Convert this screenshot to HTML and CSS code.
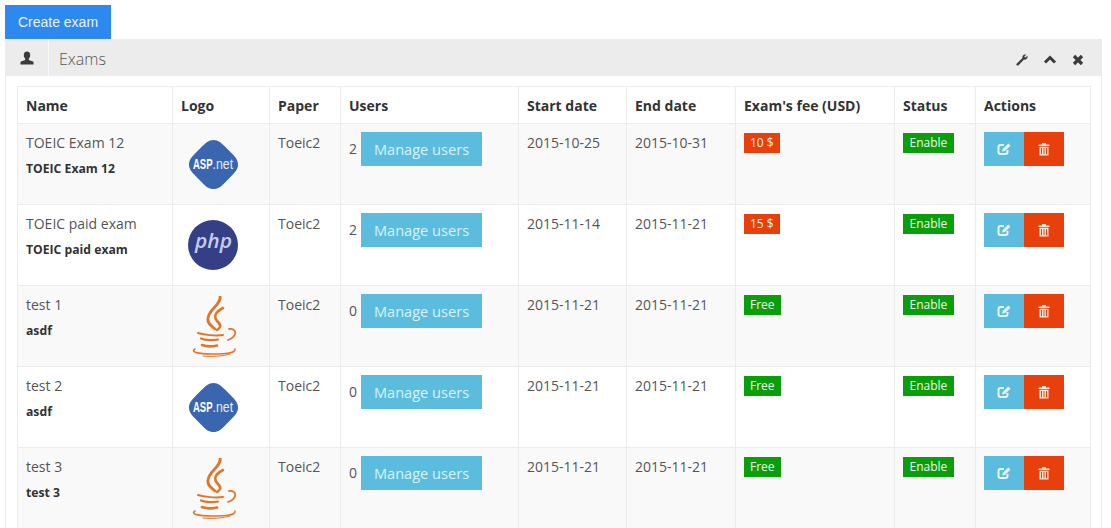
FILE: index.html
```html
<!DOCTYPE html>
<html lang="en">
<head>
<meta charset="utf-8">
<title>Exams</title>
<link rel="stylesheet" href="styles.css">
</head>
<body>
<svg class="defs" width="0" height="0" aria-hidden="true">
  <symbol id="asp" viewBox="0 0 52 52">
    <path d="M26 1C31 1 34 4 38 8L44 14C48 18 51 21 51 26C51 31 48 34 44 38L38 44C34 48 31 51 26 51C21 51 18 48 14 44L8 38C4 34 1 31 1 26C1 21 4 18 8 14L14 8C18 4 21 1 26 1Z" fill="#3a66b0"/>
  </symbol>
  <symbol id="java" viewBox="0 0 48 62">
    <g fill="none" stroke="#e0762a" stroke-linecap="round">
      <path d="M30 0C32 8 19 13 18 22C17 28 22 30 25 33" stroke-width="2.800"/>
      <path d="M33 12C25 16 23 21 28 26C32 30 30 32 27 34" stroke-width="2.600"/>
      <path d="M8 37C14 39 26 40 33 39" stroke-width="2"/>
      <path d="M39 33C47 32 48 40 38 44" stroke-width="1.800"/>
      <path d="M11 42.500C16 44.500 24 44.500 28 43.500" stroke-width="2.200"/>
      <path d="M12 49C16 50.500 23 50.500 27 49.500" stroke-width="2.600"/>
      <path d="M5 53C0 56 8 58 22 58C36 58 46 57 45 53" stroke-width="1.600"/>
      <path d="M13 60C22 61 34 60 40 58" stroke-width="1"/>
    </g>
  </symbol>
  <symbol id="edit" viewBox="0 0 16 16">
    <path d="M11.500 9V11C11.500 12.400 10.900 13 9.500 13H4.500C3.100 13 2.500 12.400 2.500 11V6C2.500 4.600 3.100 4 4.500 4H8" fill="none" stroke="currentColor" stroke-width="2"/>
    <path d="M6 10.500L6.700 8L12.300 2.500L14.500 4.700L9 10Z" fill="currentColor"/>
  </symbol>
  <symbol id="trash" viewBox="0 0 12 14">
    <path d="M0.500 2.500H4V1H8V2.500H11.500V4H0.500ZM1.500 4.800H10.500V13.500H1.500ZM3 6V12.300H4V6ZM5.500 6V12.300H6.500V6ZM8 6V12.300H9V6Z" fill="currentColor" fill-rule="evenodd"/>
  </symbol>
</svg>

<main class="page">
  <button class="create" type="button">Create exam</button>
  <section class="panel">
    <header class="panel-head">
      <span class="head-icon">
        <svg width="14" height="14" viewBox="0 0 14 14"><path d="M7 0.500C9.200 0.500 10.300 2.200 10.200 4.300C10.100 6 9.500 7 8.800 7.800L8.800 8.900L13.500 10.800V13.500H0.500V10.800L5.200 8.900L5.200 7.800C4.500 7 3.900 6 3.800 4.300C3.700 2.200 4.800 0.500 7 0.500Z" fill="#3b3b3b"/></svg>
      </span>
      <h2 class="head-title">Exams</h2>
      <span class="head-tools">
        <svg class="tool-wrench" width="12" height="12" viewBox="0 0 14 14"><path d="M13.500 3.200C13.500 5.500 11.500 7 9.300 6.500L3 13C2.300 13.700 1.200 13.700 0.800 13.200C0.300 12.700 0.300 11.700 1 11L7.500 4.700C7 2.500 8.500 0.500 10.800 0.500C11.300 0.500 11.700 0.600 12 0.700L9.800 2.800L10.200 3.800L11.200 4.200L13.300 2C13.400 2.300 13.500 2.800 13.500 3.200Z" fill="#3b3b3b"/></svg>
        <svg width="14" height="14" viewBox="0 0 14 14"><path d="M2 9.500L7 4.500L12 9.500" fill="none" stroke="#3b3b3b" stroke-width="3"/></svg>
        <svg width="14" height="14" viewBox="0 0 14 14"><path d="M3 3L11 11M11 3L3 11" fill="none" stroke="#3b3b3b" stroke-width="3.200"/></svg>
      </span>
    </header>
    <div class="panel-body">
      <table class="exams">
        <colgroup>
          <col class="c-name"><col class="c-logo"><col class="c-paper"><col class="c-users"><col class="c-start"><col class="c-end"><col class="c-fee"><col class="c-status"><col class="c-actions">
        </colgroup>
        <thead>
          <tr><th>Name</th><th>Logo</th><th>Paper</th><th>Users</th><th>Start date</th><th>End date</th><th>Exam's fee (USD)</th><th>Status</th><th>Actions</th></tr>
        </thead>
        <tbody>
          <tr>
            <td><div class="title">TOEIC Exam 12</div><div class="sub">TOEIC Exam 12</div></td>
            <td class="logo"><svg class="lg-asp" viewBox="0 0 52 52"><use href="#asp" width="52" height="52"/><text x="5" y="31" class="asp-a" textLength="20" lengthAdjust="spacingAndGlyphs">ASP</text><text x="25" y="31" class="asp-b" textLength="21" lengthAdjust="spacingAndGlyphs">.net</text></svg></td>
            <td>Toeic2</td>
            <td class="users"><span class="users-in">2 <button class="manage" type="button">Manage users</button></span></td>
            <td>2015-10-25</td><td>2015-10-31</td>
            <td><span class="tag paid">10 $</span></td>
            <td><span class="tag on">Enable</span></td>
            <td class="acts"><span class="act-group"><button class="act edit" type="button"><svg width="16" height="16"><use href="#edit"/></svg></button><button class="act del" type="button"><svg width="12" height="14"><use href="#trash"/></svg></button></span></td>
          </tr>
          <tr>
            <td><div class="title">TOEIC paid exam</div><div class="sub">TOEIC paid exam</div></td>
            <td class="logo"><svg class="lg-php" viewBox="0 0 50 50"><circle cx="25" cy="25" r="25" fill="#343f85"/><text x="7" y="28" class="php-t" textLength="37" lengthAdjust="spacingAndGlyphs">php</text></svg></td>
            <td>Toeic2</td>
            <td class="users"><span class="users-in">2 <button class="manage" type="button">Manage users</button></span></td>
            <td>2015-11-14</td><td>2015-11-21</td>
            <td><span class="tag paid">15 $</span></td>
            <td><span class="tag on">Enable</span></td>
            <td class="acts"><span class="act-group"><button class="act edit" type="button"><svg width="16" height="16"><use href="#edit"/></svg></button><button class="act del" type="button"><svg width="12" height="14"><use href="#trash"/></svg></button></span></td>
          </tr>
          <tr>
            <td><div class="title">test 1</div><div class="sub">asdf</div></td>
            <td class="logo"><svg class="lg-java"><use href="#java"/></svg></td>
            <td>Toeic2</td>
            <td class="users"><span class="users-in">0 <button class="manage" type="button">Manage users</button></span></td>
            <td>2015-11-21</td><td>2015-11-21</td>
            <td><span class="tag free">Free</span></td>
            <td><span class="tag on">Enable</span></td>
            <td class="acts"><span class="act-group"><button class="act edit" type="button"><svg width="16" height="16"><use href="#edit"/></svg></button><button class="act del" type="button"><svg width="12" height="14"><use href="#trash"/></svg></button></span></td>
          </tr>
          <tr>
            <td><div class="title">test 2</div><div class="sub">asdf</div></td>
            <td class="logo"><svg class="lg-asp" viewBox="0 0 52 52"><use href="#asp" width="52" height="52"/><text x="5" y="31" class="asp-a" textLength="20" lengthAdjust="spacingAndGlyphs">ASP</text><text x="25" y="31" class="asp-b" textLength="21" lengthAdjust="spacingAndGlyphs">.net</text></svg></td>
            <td>Toeic2</td>
            <td class="users"><span class="users-in">0 <button class="manage" type="button">Manage users</button></span></td>
            <td>2015-11-21</td><td>2015-11-21</td>
            <td><span class="tag free">Free</span></td>
            <td><span class="tag on">Enable</span></td>
            <td class="acts"><span class="act-group"><button class="act edit" type="button"><svg width="16" height="16"><use href="#edit"/></svg></button><button class="act del" type="button"><svg width="12" height="14"><use href="#trash"/></svg></button></span></td>
          </tr>
          <tr>
            <td><div class="title">test 3</div><div class="sub">test 3</div></td>
            <td class="logo"><svg class="lg-java"><use href="#java"/></svg></td>
            <td>Toeic2</td>
            <td class="users"><span class="users-in">0 <button class="manage" type="button">Manage users</button></span></td>
            <td>2015-11-21</td><td>2015-11-21</td>
            <td><span class="tag free">Free</span></td>
            <td><span class="tag on">Enable</span></td>
            <td class="acts"><span class="act-group"><button class="act edit" type="button"><svg width="16" height="16"><use href="#edit"/></svg></button><button class="act del" type="button"><svg width="12" height="14"><use href="#trash"/></svg></button></span></td>
          </tr>
        </tbody>
      </table>
    </div>
  </section>
</main>
</body>
</html>
```
FILE: styles.css
```css
* { box-sizing: border-box; }
html, body { margin: 0; height: 528px; overflow: hidden; background: #fff; }
body { font-family: "Open Sans", sans-serif; font-size: 14px; color: #444; }
.defs { position: absolute; }
.page { padding: 5px 9px 0 5px; }

.create {
  display: block; width: 106px; height: 34px; padding: 0; border: 0;
  background: #2d89ef; color: #e8f3ff;
  font: 14px "Liberation Sans", Arial, sans-serif;
}

.panel { border-left: 1px solid #ececec; border-right: 1px solid #ececec; }
.panel-head { display: flex; align-items: center; height: 37px; background: #ececec; margin-left: -1px; margin-right: -1px; }
.head-icon { box-sizing: content-box; display: flex; justify-content: center; align-items: center; width: 43px; height: 37px; border-right: 1px solid #f8f8f8; }
.head-title { margin: 2px 0 0 10px; font-size: 16px; font-weight: 300; color: #555; flex: 1; }
.head-tools { display: flex; align-items: center; gap: 14px; padding: 4px 17px 0 0; }
.tool-wrench { margin-right: 1px; }

.panel-body { padding: 10px 11px 0 11px; }
.exams { width: 1073px; border-collapse: collapse; table-layout: fixed; background: #fff; }
.c-name { width: 155px; } .c-logo { width: 97px; } .c-paper { width: 71px; }
.c-users { width: 178px; } .c-start { width: 108px; } .c-end { width: 109px; }
.c-fee { width: 159px; } .c-status { width: 81px; } .c-actions { width: 115px; }
.exams th, .exams td { border: 1px solid #ececec; padding: 9px 8px 8px; vertical-align: top; text-align: left; }
.exams th { height: 37px; font-size: 14px; font-weight: 700; color: #333; }
.exams td { height: 81px; line-height: 20px; color: #555; }
.exams tbody tr:nth-child(odd) td { background: #f9f9f9; }

.title { color: #555; }
.sub { margin-top: 7px; font-size: 12.200px; font-weight: 700; color: #333; line-height: 18px; }

.exams td.logo { padding: 6px 0 0 15px; }
.logo svg { display: block; }
.lg-asp { width: 51px; height: 51px; margin-top: 9px; }
.lg-php { width: 50px; height: 50px; margin-top: 9px; }
.lg-java { width: 48px; height: 62px; margin: 4px 0 0 2px; }
.asp-a { font: 700 14px "Liberation Sans", sans-serif; fill: #fff; }
.asp-b { font: 400 14px "Liberation Sans", sans-serif; fill: #e6ecf7; }
.php-t { font: italic 600 20px "Open Sans", sans-serif; fill: #c3cdee; }

.exams td.users { padding-top: 8px; }
.users-in { display: flex; align-items: center; gap: 4px; white-space: nowrap; }
.manage {
  height: 34px; width: 121px; padding: 0; border: 0;
  background: #5bbcdd; color: #d6f3fb; font: 14.600px "Open Sans", sans-serif;
}

.tag { display: inline-block; height: 20px; padding: 0 6px; font-size: 12px; line-height: 20px; color: #f2f2f2; vertical-align: top; }
.paid { background: #e8400c; }
.free { background: #0a9f0a; }
.on { background: #0a9f0a; padding: 0 6.500px; }

.exams td.acts { padding-top: 8px; }
.act-group { display: flex; }
.act { display: flex; align-items: center; justify-content: center; width: 40px; height: 34px; padding: 0; border: 0; color: #e6f6fb; }
.edit { background: #5bbcdd; }
.del { background: #e8400c; color: #fde6da; }
```
